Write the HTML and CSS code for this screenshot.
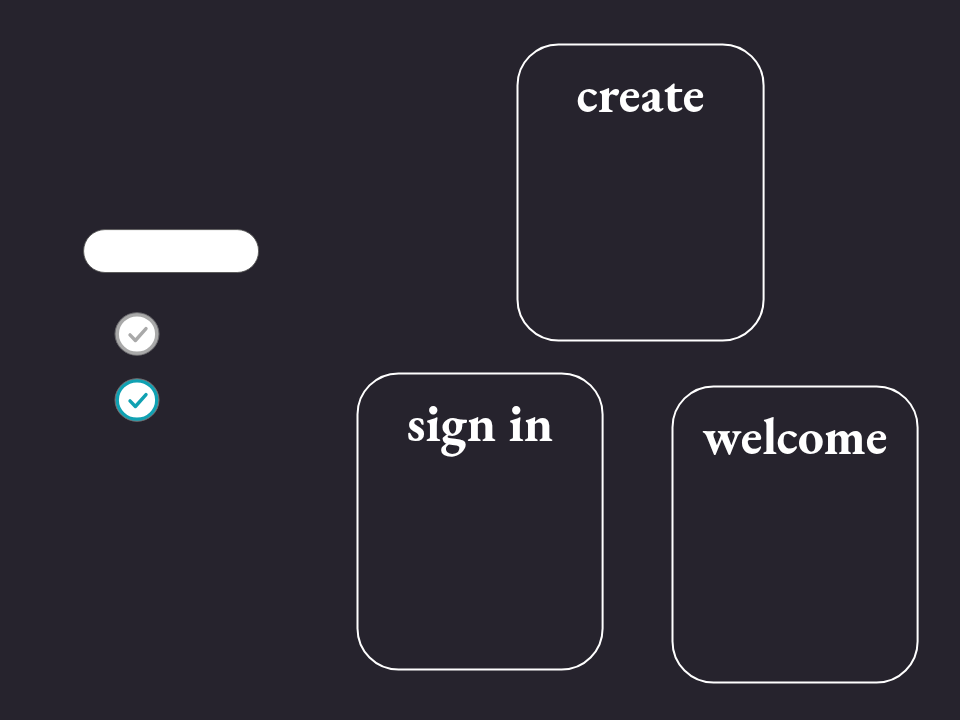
FILE: index.html
```
<!DOCTYPE html>
<html lang="en">
<head>
<meta charset="utf-8">
<title>Account screens</title>
<link rel="stylesheet" href="styles.css">
</head>
<body>
<main class="canvas">
  <div class="node pill"><svg width="180" height="48"><rect x="2.6" y="2.6" width="175" height="42.9" rx="21.4"/></svg></div>
  <div class="node check check-off"><svg width="48" height="48"><ellipse class="halo" cx="24" cy="24" rx="22" ry="21.3"/><ellipse class="ring" cx="24" cy="24" rx="19.7" ry="19.2"/><path d="M17 24.9L22.4 30.5L33 18.6"/></svg></div>
  <div class="node check check-on"><svg width="48" height="48"><ellipse class="halo" cx="24" cy="24" rx="22" ry="21.3"/><ellipse class="ring" cx="24" cy="24" rx="19.7" ry="19.2"/><path d="M17 24.9L22.4 30.5L33 18.6"/></svg></div>
  <section class="node card create">
    <svg class="outline" width="250" height="300"><rect x="2.5" y="2.4" width="246.1" height="296.1" rx="41"/></svg>
    <h2>create</h2>
  </section>
  <section class="node card sign-in">
    <svg class="outline" width="250" height="300"><rect x="2.5" y="2.4" width="245.1" height="296.1" rx="41"/></svg>
    <h2>sign in</h2>
  </section>
  <section class="node card welcome">
    <svg class="outline" width="250" height="300"><rect x="2.5" y="2.4" width="245.1" height="296.1" rx="41"/></svg>
    <h2>welcome</h2>
  </section>
</main>
</body>
</html>
```
FILE: styles.css
```
body {
  margin: 0;
  background: #26232d;
}
.canvas {
  position: relative;
  width: 960px;
  height: 720px;
  overflow: hidden;
}
.node { position: absolute; }
svg { display: block; }

.pill { left: 81px; top: 227px; }
.pill rect { fill: #fff; stroke: #555; stroke-width: 0.9; }

.check { left: 113px; color: #a9a9a9; }
.check-off { top: 310px; }
.check-on { top: 376px; color: #10a1b2; }
.halo { fill: #8b8b8d; stroke: #6c6b6f; stroke-width: 1; }
.ring { fill: #fff; stroke: currentColor; stroke-width: 3.2; }
.check path {
  fill: none;
  stroke: currentColor;
  stroke-width: 3.4;
  stroke-linecap: round;
  stroke-linejoin: round;
}

.card {
  width: 250px;
  height: 300px;
}
.create { left: 515px; top: 42px; }
.sign-in { left: 355px; top: 371px; }
.welcome { left: 670px; top: 384px; }
.outline { position: absolute; inset: 0; }
.outline rect { fill: none; stroke: #fff; stroke-width: 2; }

h2 {
  margin: 0;
  padding-top: 24px;
  color: #fff;
  font: bold 52px/56px "EB Garamond", "Liberation Serif", serif;
  text-align: center;
  white-space: nowrap;
}
.create h2 { padding-left: 1px; }
```
